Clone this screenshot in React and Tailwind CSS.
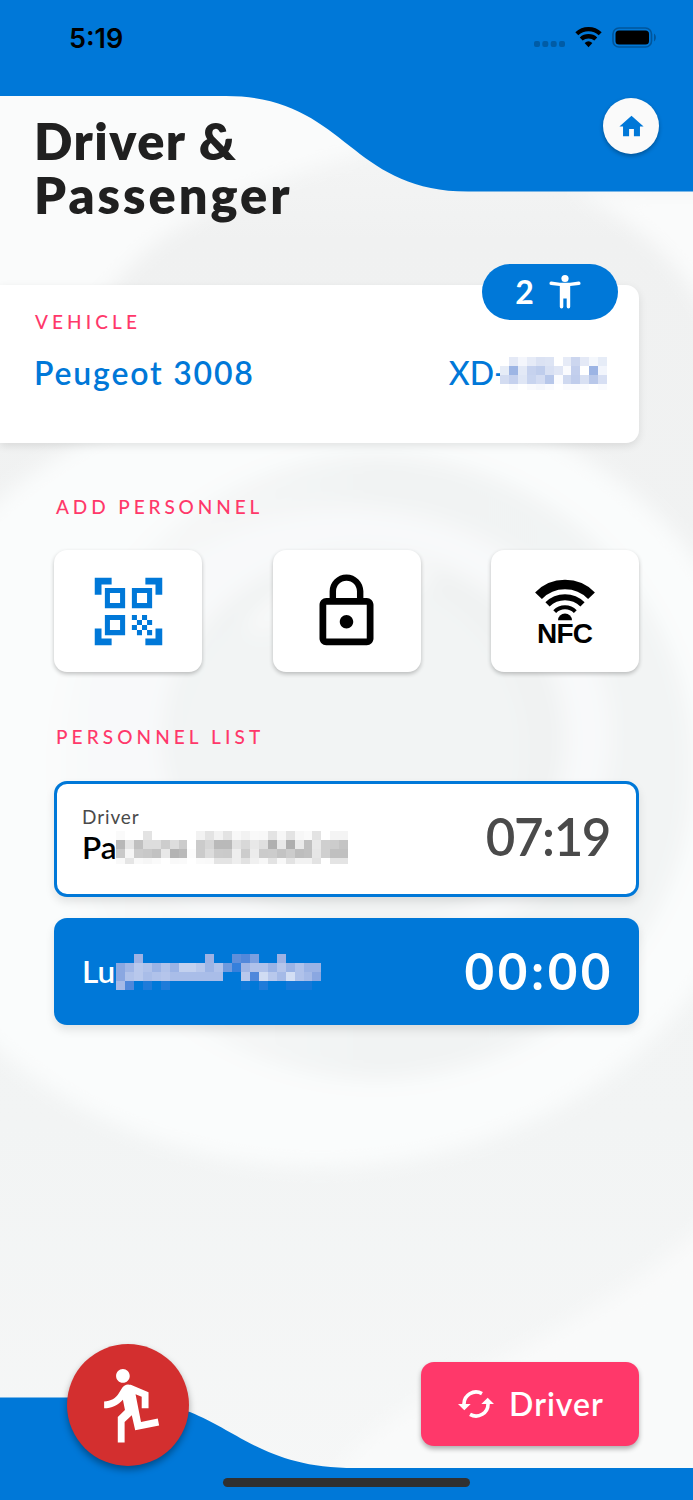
import React from 'react';
import { MdDirectionsRun, MdHome, MdLockOutline, MdQrCodeScanner } from 'react-icons/md';

const plateMask = [
  '- E4E9F6 F4F6FC E6EBF7 DBE2F3 DDE4F4 - E6EBF7 CCD6EF E4E9F6 F4F7FC E6ECF7',
  'E6ECF7 9DB5E4 E3E9F6 C6D2EE BFCDEC D8E0F3 E0E6F5 FAFBFE C3CFED - 9CB4E4 F2F5FC',
  'D3DCF1 C5D1EE DFE6F5 C8D4EF D3DCF2 B7C7EA FAFBFE CFD9F0 C0CDEC D8E0F3 B9C8EA D7DFF3',
  '- F9FAFD - F9FAFD F5F7FC FAFBFE - FAFBFE FAFBFE FAFBFE - FAFBFE',
];

const driverMask = [
  'FAFAFA - - E3E3E3 - - - - - F2F2F2 E3E3E3 F2F2F2 E3E3E3 F8F8F8 F2F2F2 F9F9F9 F8F8F8 E3E3E3 F6F6F6 E3E3E3 F7F7F7 FAFAFA E3E3E3 - F4F4F4 F4F4F4',
  'B8B8B8 E6E6E6 C0C0C0 DDDDDD DDDDDD CDCDCD DDDDDD CCCCCC - CBCBCB D6D6D6 B9B9B9 B9B9B9 E2E2E2 D8D8D8 E8E8E8 DFDFDF B0B0B0 E8E8E8 AEAEAE EAEAEA C0C0C0 E8E8E8 CFCFCF CCCCCC C4C4C4',
  'C9C9C9 F5F5F5 CBCBCB C8C8C8 C2C2C2 E8E8E8 B3B3B3 B9B9B9 FCFCFC CBCBCB DCDCDC CBCBCB CACACA EEEEEE CCCCCC ECECEC CBCBCB CCCCCC C3C3C3 CCCCCC BDBDBD C0C0C0 E6E6E6 CFCFCF C0C0C0 C0C0C0',
  'F9F9F9 E5E5E5 F9F9F9 F6F6F6 FAFAFA - F9F9F9 FAFAFA - FAFAFA F9F9F9 E4E4E4 E4E4E4 EEEEEE E2E2E2 F0F0F0 F7F7F7 E3E3E3 F8F8F8 E3E3E3 F2F2F2 F2F2F2 E3E3E3 - E4E4E4 E4E4E4',
];

const passengerMask = [
  '- - 9DB2E4 - - - - - - - 9DB2E4 - - 5F8FDB 5288DB 7A9FE0 - - 9DB2E4 - - - -',
  '8AA7E1 A0B6E6 B8C8EC B0C2EA 9BB3E5 B0C2EA 9BB3E5 C3D1EF C3D1EF B8C8EC 9EB5E5 B0C2EA 6F9ADE 3580DC A0B6E6 B0C2EA B0C2EA 9BB3E5 B5C5EB 9BB3E5 B0C2EA 9BB3E5 9BB3E5',
  '8AA7E1 B0C2EA B8C8EC A9BDE8 B0C2EA B5C5EB A9BDE8 A9BDE8 A9BDE8 A9BDE8 A9BDE8 A9BDE8 - - B8C8EC 4F88DB D0DCF3 B8C8EC A5BAE7 D3DEF4 B0C2EA A5BAE7 8AA7E1',
  'A5BAE7 4F88DB - 1F7BD9 - 1F7BD9 - - - - - - - - 0E78D8 - 1F7BD9 - - 1478D8 1478D8 1478D8 -',
];

const Mosaic = ({ rows, lastHeight = 9, className }) => {
  const cell = 8.93;
  const cols = rows[0].split(' ').length;
  return (
    <svg className={className} width={cols * cell} height={27 + lastHeight} shapeRendering="crispEdges">
      {rows.map((row, y) =>
        row.split(' ').map((color, x) =>
          color === '-' ? null : (
            <rect
              key={`${x}-${y}`}
              x={x * cell}
              y={y * 9}
              width={cell}
              height={y === rows.length - 1 ? lastHeight : 9}
              fill={`#${color}`}
            />
          )
        )
      )}
    </svg>
  );
};

const Background = () => (
  <svg className="absolute inset-0" width="693" height="1500" viewBox="0 0 693 1500">
    <defs>
      <filter id="soft" x="-20%" y="-20%" width="140%" height="140%">
        <feGaussianBlur stdDeviation="10" />
      </filter>
      <linearGradient id="base" x1="0" y1="0" x2="0" y2="1">
        <stop offset="0" stopColor="#fafbfb" />
        <stop offset="0.16" stopColor="#f0f1f1" />
        <stop offset="0.75" stopColor="#f2f4f4" />
        <stop offset="1" stopColor="#f6f7f7" />
      </linearGradient>
      <linearGradient id="ring" x1="0" y1="0" x2="1" y2="0">
        <stop offset="0" stopColor="#f9fafa" />
        <stop offset="0.5" stopColor="#f1f3f3" />
        <stop offset="1" stopColor="#f2f4f4" />
      </linearGradient>
    </defs>
    <rect width="693" height="1500" fill="url(#base)" />
    <g filter="url(#soft)">
      <path d="M-20 60H340L370 150C270 180 170 210 110 290L-20 400Z" fill="#fafbfb" />
      <path d="M570 190H720V340C690 270 640 220 570 190Z" fill="#fafbfb" />
      <ellipse cx="320" cy="775" rx="450" ry="392" fill="#fafcfc" />
      <ellipse cx="375" cy="767" rx="318" ry="312" fill="url(#ring)" />
      <ellipse cx="350" cy="735" rx="262" ry="228" fill="#f8f9fa" />
      <ellipse cx="365" cy="740" rx="200" ry="188" fill="#f0f2f2" />
      <ellipse cx="350" cy="750" rx="175" ry="175" fill="#f2f4f4" />
      <path d="M255 630C300 575 370 555 430 580" fill="none" stroke="#f9fafa" strokeWidth="18" />
      <path d="M720 1210C560 1370 350 1390 330 1500H720Z" fill="#f9fafa" />
    </g>
    <path d="M0 0H693V191.5H468C348 191.5 346 96 226 96H0Z" fill="#0078d8" />
    <path d="M0 1397.5H107C230 1397.5 232 1468 355 1468H693V1500H0Z" fill="#0078d8" />
  </svg>
);

const StatusBar = () => (
  <div className="flex h-[76px] items-center justify-between pl-[69px] pr-[36px]">
    <span className="pt-[3px] font-['Inter',sans-serif] text-[27px] font-semibold text-black">5:19</span>
    <svg width="124" height="26" viewBox="0 0 124 26">
      <g fill="#005ca6">
        <rect x="1" y="16" width="6" height="6" rx="2" />
        <rect x="9.3" y="16" width="6" height="6" rx="2" />
        <rect x="17.7" y="16" width="6" height="6" rx="2" />
        <rect x="26" y="16" width="6" height="6" rx="2" />
      </g>
      <g fill="none" stroke="#000" strokeWidth="4.3">
        <path d="M43.8 8.8A17 17 0 0 1 67.2 8.8" />
        <path d="M48.2 14A11 11 0 0 1 62.8 14" />
      </g>
      <path d="M51.6 18A6 6 0 0 1 59.4 18L55.5 22.2Z" />
      <rect x="80" y="3" width="38.5" height="19" rx="6" fill="none" stroke="#00559b" strokeWidth="1.6" />
      <rect x="82.5" y="5.5" width="33.5" height="14" rx="3.5" />
      <path d="M121 8.5V16.5C123.5 15 123.5 10 121 8.5Z" fill="#00559b" />
    </svg>
  </div>
);

const BodyIcon = () => (
  <svg width="32" height="36" viewBox="0 0 32 36" fill="#fff">
    <circle cx="16" cy="4.5" r="3.6" />
    <path d="M2.3 7.6L11 8.7H21L29.7 7.6A1.7 1.7 0 0 1 30 11L21.2 12.1V32.8A1.7 1.7 0 0 1 17.7 32.8V24.5H14.3V32.8A1.7 1.7 0 0 1 10.8 32.8V12.1L2 11A1.7 1.7 0 0 1 2.3 7.6Z" />
  </svg>
);

const NfcIcon = () => (
  <svg width="72" height="84" viewBox="-3 -9 72 84">
    <g fill="none" stroke="#000">
      <path d="M6.5 17.8A37 37 0 0 1 59.5 17.8" strokeWidth="9.5" />
      <path d="M15.5 26.3A25 25 0 0 1 50.5 26.3" strokeWidth="6" />
      <path d="M22.7 33.6A14.5 14.5 0 0 1 43.3 33.6" strokeWidth="4" />
    </g>
    <path d="M26 42.2A7 6.8 0 0 1 40 42.2Z" />
    <text
      x="33"
      y="64.5"
      textAnchor="middle"
      textLength="56"
      className="font-['Liberation_Sans',Arial,sans-serif] text-[28px] font-bold"
    >
      NFC
    </text>
  </svg>
);

const SwapIcon = () => (
  <svg width="36" height="28" viewBox="-18 -14 36 28">
    <g fill="none" stroke="#fff" strokeWidth="3.6">
      <path d="M6 -10.4A12 12 0 0 0 -12 0.5" />
      <path d="M-6 10.4A12 12 0 0 0 12 -0.5" />
    </g>
    <path d="M-18 0H-5.3L-11.7 6.3Z M18 0H5.3L11.7 -6.3Z" fill="#fff" />
  </svg>
);

const ActionCard = ({ children }) => (
  <button className="flex h-[122px] w-[148px] items-center justify-center rounded-[13px] bg-white shadow-[0_2px_4px_rgba(0,0,0,0.24)]">
    {children}
  </button>
);

const App = () => {
  return (
    <div className="relative h-[1500px] w-[693px] overflow-hidden font-['Lato',sans-serif]">
      <Background />
      <div className="relative flex h-full flex-col">
        <StatusBar />

        <header className="flex h-[209px] items-start justify-between pl-[34px] pr-[34px] pt-[22px]">
          <h1 className="pt-[16px] text-[50.5px] font-extrabold leading-[54px] text-[#202020]">
            <span className="tracking-[1.5px]">Driver &amp;</span>
            <br />
            <span className="tracking-[3px]">Passenger</span>
          </h1>
          <button className="flex size-14 items-center justify-center rounded-full bg-[#fafafa] text-[#0078d8] shadow-[0_2px_4px_rgba(0,0,0,0.3)]">
            <MdHome size={29} />
          </button>
        </header>

        <section className="relative h-[158px] w-[639px] rounded-r-[13px] bg-white pl-[34px] pr-[32px] pt-[25px] shadow-[0_3px_8px_rgba(0,0,0,0.1)]">
          <h2 className="pl-px text-[19px] font-medium leading-6 tracking-[4.1px] text-[#ff386a]">VEHICLE</h2>
          <div className="mt-[19px] flex items-center justify-between text-[32px] font-semibold leading-10 text-[#0078d8]">
            <span className="tracking-[1.8px]">Peugeot 3008</span>
            <span className="flex items-center">
              <span className="w-[51px] whitespace-nowrap font-medium">XD-</span>
              <Mosaic rows={plateMask} lastHeight={6} />
            </span>
          </div>
          <div className="absolute right-[21px] -top-[21px] flex h-[56px] w-[136px] items-center justify-center gap-[15px] rounded-full bg-[#0078d8] pb-px pr-[4px] text-[32px] font-bold text-white">
            2
            <BodyIcon />
          </div>
        </section>

        <main className="px-[54px]">
          <h2 className="pl-[2px] pt-[52px] text-[19px] font-medium leading-6 tracking-[3.9px] text-[#ff386a]">ADD PERSONNEL</h2>
          <div className="mt-[31px] flex w-[585px] justify-between">
            <ActionCard>
              <MdQrCodeScanner size={81} color="#0078d8" />
            </ActionCard>
            <ActionCard>
              <MdLockOutline size={81} color="#000" />
            </ActionCard>
            <ActionCard>
              <NfcIcon />
            </ActionCard>
          </div>

          <h2 className="mt-[53px] pl-[2px] text-[19px] font-medium leading-6 tracking-[4.1px] text-[#ff386a]">PERSONNEL LIST</h2>
          <div className="mt-[32px] flex h-[116px] w-[585px] items-center justify-between rounded-[13px] border-[3px] border-[#0078d8] bg-white pl-[25px] pr-[26px] shadow-[0_5px_10px_rgba(0,0,0,0.1)]">
            <div className="pb-[7px]">
              <p className="text-[19px] leading-6 tracking-[0.9px] text-[#4a4a4a]">Driver</p>
              <div className="flex h-[38px] items-center text-[31.5px] font-semibold text-black">
                <span className="w-[34px] whitespace-nowrap">Pa</span>
                <Mosaic rows={driverMask} lastHeight={6.5} />
              </div>
            </div>
            <span className="pb-[3px] text-[51px] font-semibold -tracking-[1.4px] text-[#4a4a4a]">07:19</span>
          </div>
          <div className="mt-[21px] flex h-[107px] w-[585px] items-center justify-between rounded-[13px] bg-[#0078d8] pl-[28px] pr-[25px] text-white shadow-[0_5px_10px_rgba(0,0,0,0.1)]">
            <div className="flex items-center pt-px text-[31.5px] font-semibold leading-9">
              <span className="w-[34px] whitespace-nowrap pb-[2px]">Lu</span>
              <Mosaic rows={passengerMask} />
            </div>
            <span className="pb-px text-[51px] font-bold tracking-[3.6px]">00:00</span>
          </div>
        </main>

        <footer className="mt-auto flex h-[134px] items-start justify-between pl-[67px] pr-[54px]">
          <button className="-mt-[22px] flex size-[122px] items-center justify-center rounded-full bg-[#d32f2f] shadow-[0_4px_7px_rgba(0,0,0,0.35)]">
            <MdDirectionsRun size={82} color="#fff" className="-scale-x-100" />
          </button>
          <button className="-mt-[4px] flex h-[84px] w-[218px] items-center justify-center gap-[15px] rounded-[13px] bg-[#ff386a] pb-px pl-[2px] text-[32px] font-semibold tracking-[1px] text-white shadow-[0_3px_5px_rgba(0,0,0,0.3)]">
            <SwapIcon />
            Driver
          </button>
        </footer>
        <div className="absolute bottom-[13px] left-[223px] h-[9px] w-[247px] rounded-full bg-[#303030]" />
      </div>
    </div>
  );
};

export default App;
